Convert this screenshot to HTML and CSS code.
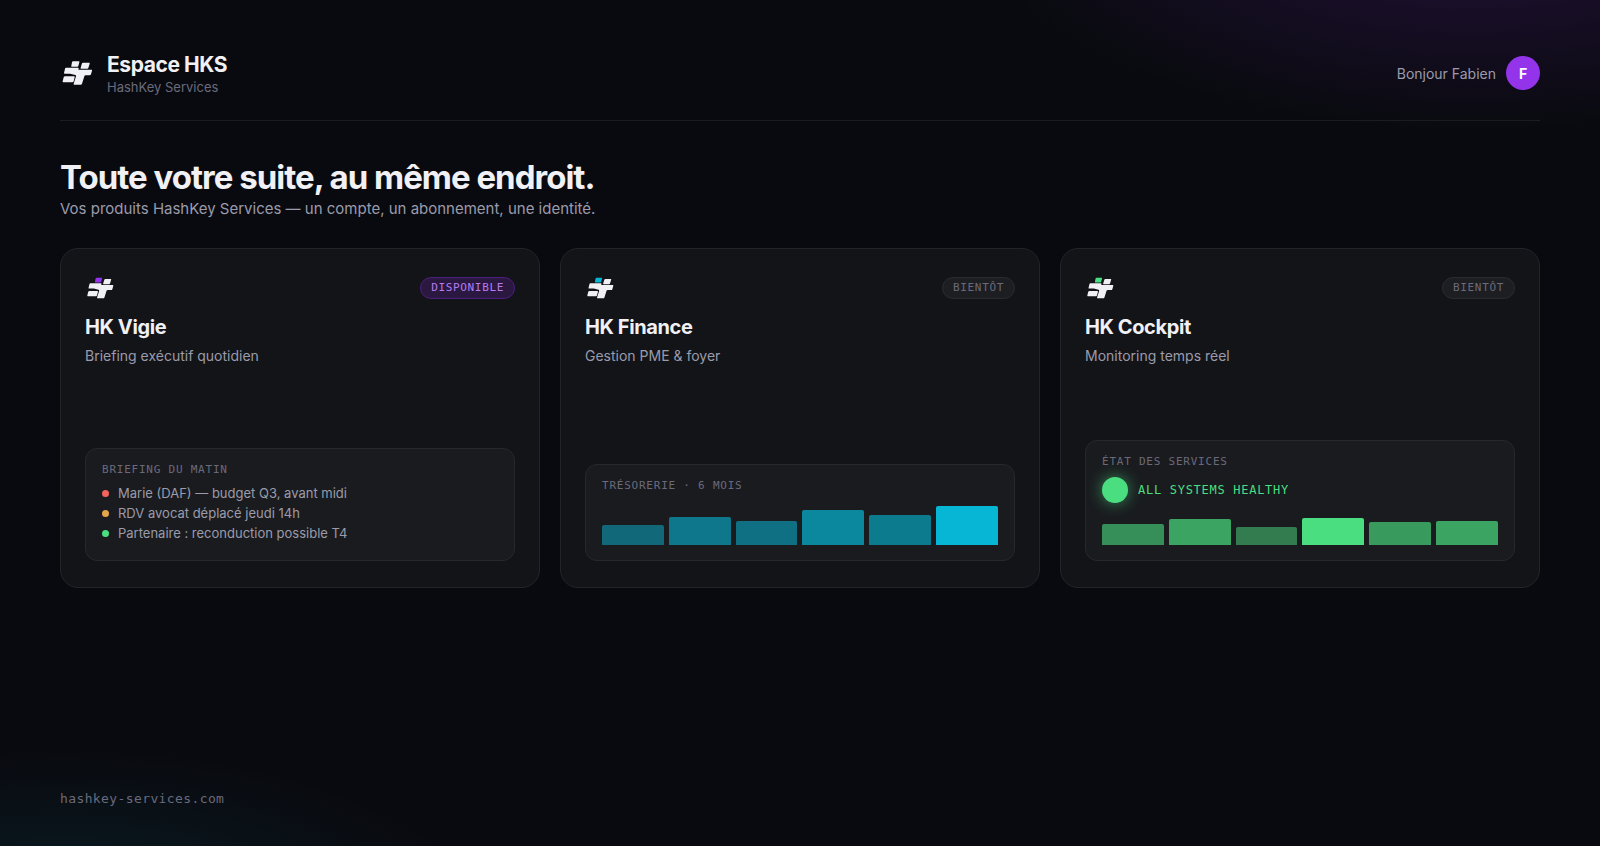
FILE: index.html
```
<!DOCTYPE html>
<html lang="fr">
<head>
    <meta charset="UTF-8">
    <meta name="viewport" content="width=device-width, initial-scale=1.0">
    <title>Espace HKS</title>
    <link rel="stylesheet" href="styles.css">
</head>
<body>

    <!-- Logo shapes shared by the header and the cards -->
    <svg class="defs" width="0" height="0" aria-hidden="true">
        <symbol id="logo" viewBox="0 0 102 102">
            <path class="key" d="M39 16h18q2 0 1 3l-3 11q-1 2-3 2H35q-2 0-1-3l2-10q1-3 3-3z"/>
            <path d="M69 20h19q2 0 1 3l-4 13q-1 2-3 2H63q-2 0-1-3l4-13q1-2 3-2z"/>
            <path d="M18 35h36q3 0 2 3l-1 3h40q2 0 1 3l-3 11q-1 3-4 3H77q-3 0-4 3l-7 22q-1 3-4 3H43q-3 0-2-3l7-22q1-3-2-4l-16-4H14q-2 0-2-2l3-13q1-3 3-3z"/>
            <path d="M15 61h27q3 0 2 3l-3 12q-1 3-4 3H10q-3 0-2-3l3-12q1-3 4-3z"/>
        </symbol>
    </svg>

    <div class="page">
        <header class="header">
            <div class="brand">
                <svg class="brand-logo" aria-hidden="true"><use href="#logo"/></svg>
                <div>
                    <div class="brand-name">Espace HKS</div>
                    <div class="brand-sub">HashKey Services</div>
                </div>
            </div>
            <div class="user">
                <span>Bonjour Fabien</span>
                <div class="avatar">F</div>
            </div>
        </header>

        <main>
            <h1>Toute votre suite, au même endroit.</h1>
            <p class="lead">Vos produits HashKey Services — un compte, un abonnement, une identité.</p>

            <div class="cards">
                <article class="card vigie">
                    <div class="card-top">
                        <svg class="card-logo" aria-hidden="true"><use href="#logo"/></svg>
                        <span class="badge badge-on">DISPONIBLE</span>
                    </div>
                    <h2>HK Vigie</h2>
                    <p class="tagline">Briefing exécutif quotidien</p>
                    <div class="panel">
                        <div class="label">BRIEFING DU MATIN</div>
                        <ul class="brief">
                            <li class="red">Marie (DAF) — budget Q3, avant midi</li>
                            <li class="orange">RDV avocat déplacé jeudi 14h</li>
                            <li class="green">Partenaire : reconduction possible T4</li>
                        </ul>
                    </div>
                </article>

                <article class="card finance">
                    <div class="card-top">
                        <svg class="card-logo" aria-hidden="true"><use href="#logo"/></svg>
                        <span class="badge">BIENTÔT</span>
                    </div>
                    <h2>HK Finance</h2>
                    <p class="tagline">Gestion PME &amp; foyer</p>
                    <div class="panel">
                        <div class="label">TRÉSORERIE · 6 MOIS</div>
                        <div class="bars bars-tall">
                            <i style="height:50%;opacity:.5"></i>
                            <i style="height:70%;opacity:.6"></i>
                            <i style="height:60%;opacity:.55"></i>
                            <i style="height:87%;opacity:.7"></i>
                            <i style="height:75%;opacity:.62"></i>
                            <i style="height:97%"></i>
                        </div>
                    </div>
                </article>

                <article class="card cockpit">
                    <div class="card-top">
                        <svg class="card-logo" aria-hidden="true"><use href="#logo"/></svg>
                        <span class="badge">BIENTÔT</span>
                    </div>
                    <h2>HK Cockpit</h2>
                    <p class="tagline">Monitoring temps réel</p>
                    <div class="panel">
                        <div class="label">ÉTAT DES SERVICES</div>
                        <div class="status"><span class="pulse"></span>ALL SYSTEMS HEALTHY</div>
                        <div class="bars">
                            <i style="height:70%;opacity:.6"></i>
                            <i style="height:86%;opacity:.7"></i>
                            <i style="height:60%;opacity:.5"></i>
                            <i style="height:90%"></i>
                            <i style="height:76%;opacity:.65"></i>
                            <i style="height:80%;opacity:.7"></i>
                        </div>
                    </div>
                </article>
            </div>
        </main>

        <footer>hashkey-services.com</footer>
    </div>

</body>
</html>
```
FILE: styles.css
```
:root {
    --bg: #090a0f;
    --card: #131418;
    --panel: #1a1b1f;
    --line: #232428;
    --text: #f0f0f5;
    --muted: #9b9bab;
    --dim: #6a6a7c;
    --mono: "DejaVu Sans Mono", monospace;
}

* {
    box-sizing: border-box;
    margin: 0;
    padding: 0;
}

body {
    font-family: Inter, sans-serif;
    color: var(--text);
    background:
        radial-gradient(ellipse 520px 250px at 92% -14%, rgba(147, 51, 234, 0.22), transparent),
        radial-gradient(ellipse 440px 200px at 4% 112%, rgba(6, 182, 212, 0.13), transparent),
        var(--bg);
    background-attachment: fixed;
}

.defs {
    position: absolute;
}

.page {
    min-height: 100vh;
    padding: 51px 60px 39px;
    display: flex;
    flex-direction: column;
}

.header {
    display: flex;
    justify-content: space-between;
    align-items: center;
    padding-bottom: 25px;
    border-bottom: 1px solid #1b1c21;
}

.brand {
    display: flex;
    align-items: center;
    gap: 13px;
}

.brand-logo {
    width: 34px;
    height: 34px;
    fill: var(--text);
}

.brand-name {
    font-size: 21px;
    font-weight: 700;
    line-height: 28px;
    letter-spacing: -0.02em;
}

.brand-sub {
    font-size: 13px;
    line-height: 16px;
    color: var(--dim);
}

.user {
    display: flex;
    align-items: center;
    gap: 10px;
    font-size: 14px;
    color: var(--muted);
}

.avatar {
    width: 34px;
    height: 34px;
    border-radius: 50%;
    background: #9333ea;
    color: #fff;
    font-weight: 700;
    display: flex;
    align-items: center;
    justify-content: center;
}

h1 {
    margin-top: 36px;
    font-size: 33px;
    line-height: 40px;
    letter-spacing: -0.03em;
}

.lead {
    margin-top: 1px;
    font-size: 15px;
    line-height: 22px;
    color: var(--muted);
}

.cards {
    display: grid;
    grid-template-columns: repeat(3, 1fr);
    gap: 20px;
    margin-top: 28px;
}

.card {
    display: flex;
    flex-direction: column;
    min-height: 340px;
    padding: 24px 24px 26px;
    background: var(--card);
    border: 1px solid var(--line);
    border-radius: 18px;
}

.vigie {
    --accent: #9333ea;
}

.finance {
    --accent: #06b6d4;
}

.cockpit {
    --accent: #4ade80;
}

.card-top {
    display: flex;
    justify-content: space-between;
    align-items: center;
}

.card-logo {
    width: 30px;
    height: 30px;
    fill: var(--text);
}

.key {
    fill: var(--accent, #f0f0f5);
}

.badge {
    padding: 3px 10px;
    font: 11px/14px var(--mono);
    letter-spacing: 0.06em;
    color: var(--dim);
    background: #1d1e22;
    border: 1px solid #2a2b30;
    border-radius: 12px;
}

.badge-on {
    color: #b77bf0;
    background: #2a1840;
    border-color: #4c1d80;
}

h2 {
    margin-top: 11px;
    font-size: 20px;
    line-height: 26px;
    letter-spacing: -0.02em;
}

.tagline {
    margin-top: 7px;
    font-size: 14px;
    line-height: 18px;
    color: var(--muted);
}

.panel {
    margin-top: auto;
    padding: 14px 16px 15px;
    background: var(--panel);
    border: 1px solid #27282c;
    border-radius: 12px;
}

.label {
    font: 11px/14px var(--mono);
    letter-spacing: 0.07em;
    color: var(--dim);
}

.brief {
    list-style: none;
    margin-top: 6px;
    padding-bottom: 2px;
}

.brief li {
    display: flex;
    align-items: center;
    gap: 9px;
    font-size: 13px;
    line-height: 20px;
    color: var(--muted);
}

.brief li::before {
    content: "";
    width: 7px;
    height: 7px;
    border-radius: 50%;
    background: currentColor;
}

.brief .red::before {
    background: #f4645f;
}

.brief .orange::before {
    background: #e5a54b;
}

.brief .green::before {
    background: #4ade80;
}

.bars {
    display: flex;
    align-items: flex-end;
    gap: 5px;
    height: 30px;
    margin-top: 12px;
}

.bars-tall {
    height: 40px;
}

.bars i {
    flex: 1;
    background: var(--accent);
    border-radius: 2px 2px 0 0;
}

.status {
    display: flex;
    align-items: center;
    gap: 10px;
    margin-top: 8px;
    font: 12px/16px var(--mono);
    letter-spacing: 0.06em;
    color: #4ade80;
}

.pulse {
    width: 26px;
    height: 26px;
    border-radius: 50%;
    background: #4ade80;
    box-shadow: 0 0 16px rgba(74, 222, 128, 0.6);
}

footer {
    margin-top: auto;
    font: 13px/16px var(--mono);
    letter-spacing: 0.03em;
    color: var(--dim);
}
```
